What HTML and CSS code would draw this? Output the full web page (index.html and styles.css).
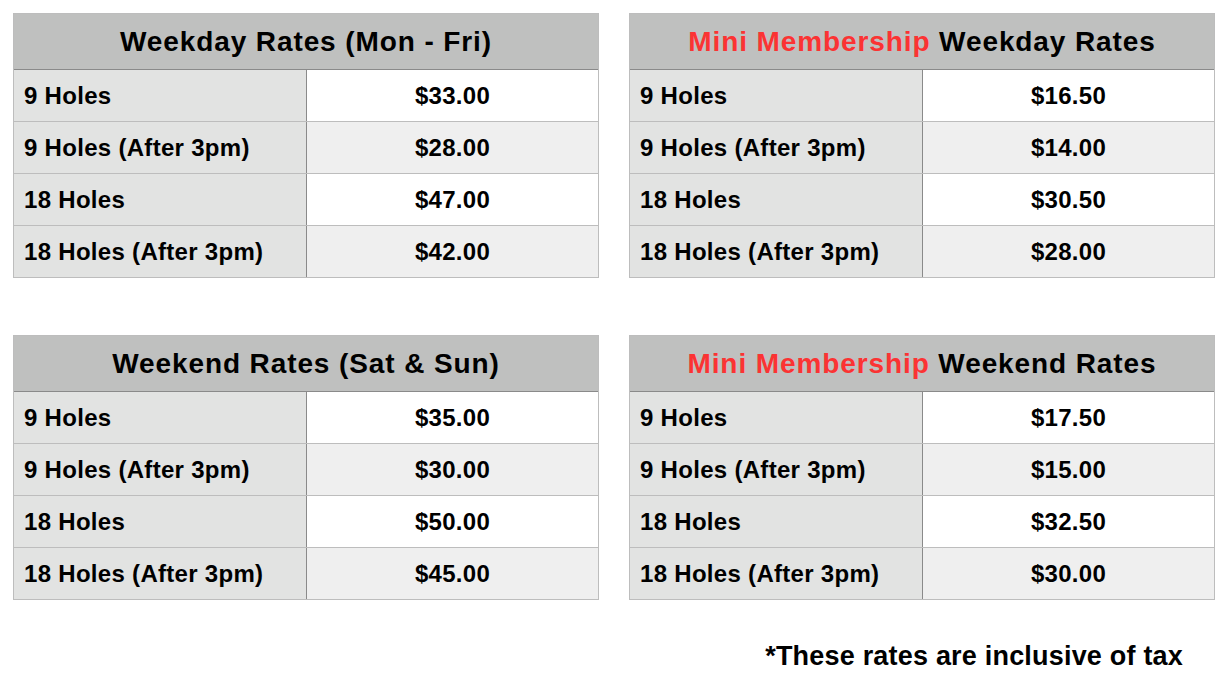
FILE: index.html
```html
<!DOCTYPE html>
<html lang="en">
<head>
<meta charset="utf-8">
<title>Golf Rates</title>
<link rel="stylesheet" href="styles.css">
</head>
<body>
<main class="page">
  <div class="grid">
    <section class="rate-table">
      <div class="head"><span>Weekday Rates (Mon - Fri)</span></div>
      <div class="row"><div class="label">9 Holes</div><div class="price">$33.00</div></div>
      <div class="row"><div class="label">9 Holes (After 3pm)</div><div class="price">$28.00</div></div>
      <div class="row"><div class="label">18 Holes</div><div class="price">$47.00</div></div>
      <div class="row"><div class="label">18 Holes (After 3pm)</div><div class="price">$42.00</div></div>
    </section>
    <section class="rate-table">
      <div class="head"><span><span class="red">Mini Membership</span> Weekday Rates</span></div>
      <div class="row"><div class="label">9 Holes</div><div class="price">$16.50</div></div>
      <div class="row"><div class="label">9 Holes (After 3pm)</div><div class="price">$14.00</div></div>
      <div class="row"><div class="label">18 Holes</div><div class="price">$30.50</div></div>
      <div class="row"><div class="label">18 Holes (After 3pm)</div><div class="price">$28.00</div></div>
    </section>
    <section class="rate-table">
      <div class="head"><span>Weekend Rates (Sat &amp; Sun)</span></div>
      <div class="row"><div class="label">9 Holes</div><div class="price">$35.00</div></div>
      <div class="row"><div class="label">9 Holes (After 3pm)</div><div class="price">$30.00</div></div>
      <div class="row"><div class="label">18 Holes</div><div class="price">$50.00</div></div>
      <div class="row"><div class="label">18 Holes (After 3pm)</div><div class="price">$45.00</div></div>
    </section>
    <section class="rate-table">
      <div class="head"><span><span class="red">Mini Membership</span> Weekend Rates</span></div>
      <div class="row"><div class="label">9 Holes</div><div class="price">$17.50</div></div>
      <div class="row"><div class="label">9 Holes (After 3pm)</div><div class="price">$15.00</div></div>
      <div class="row"><div class="label">18 Holes</div><div class="price">$32.50</div></div>
      <div class="row"><div class="label">18 Holes (After 3pm)</div><div class="price">$30.00</div></div>
    </section>
  </div>
  <p class="note">*These rates are inclusive of tax</p>
</main>
</body>
</html>
```

FILE: styles.css
```css
* { box-sizing: border-box; }
html, body { margin: 0; padding: 0; background: #fff; }
body {
  font-family: "Liberation Sans", Arial, Helvetica, sans-serif;
  font-weight: bold;
  color: #000;
}
.page {
  padding: 13px 0 0 13px;
  width: 1232px;
}
.grid {
  display: grid;
  grid-template-columns: 586px 586px;
  column-gap: 30px;
  row-gap: 57px;
}
.rate-table {
  border: 1px solid #bdbdbd;
}
.head {
  height: 56px;
  background: #bfc0bf;
  border-bottom: 1px solid #8a8a8a;
  display: flex;
  align-items: center;
  justify-content: center;
  font-size: 28px;
  letter-spacing: 0.9px;
  padding-top: 1px;
  white-space: pre;
}
.red { color: #fb3333; }
.row {
  display: grid;
  grid-template-columns: 293px 1fr;
  height: 52px;
  border-top: 1px solid #bdbdbd;
}
.head + .row { border-top: none; height: 51px; }
.label {
  background: #e2e3e2;
  border-right: 1px solid #8a8a8a;
  display: flex;
  align-items: center;
  padding-left: 10px;
  padding-top: 1px;
  font-size: 24px;
  letter-spacing: 0.3px;
}
.price {
  background: #fff;
  display: flex;
  align-items: center;
  justify-content: center;
  padding-top: 1px;
  font-size: 24px;
  letter-spacing: 0.3px;
}
.row:nth-child(odd) .price { background: #efefef; }
.note {
  margin: 41px 0 0 0;
  padding-right: 49px;
  text-align: right;
  font-size: 27px;
  line-height: 30px;
  letter-spacing: 0.2px;
}
```
